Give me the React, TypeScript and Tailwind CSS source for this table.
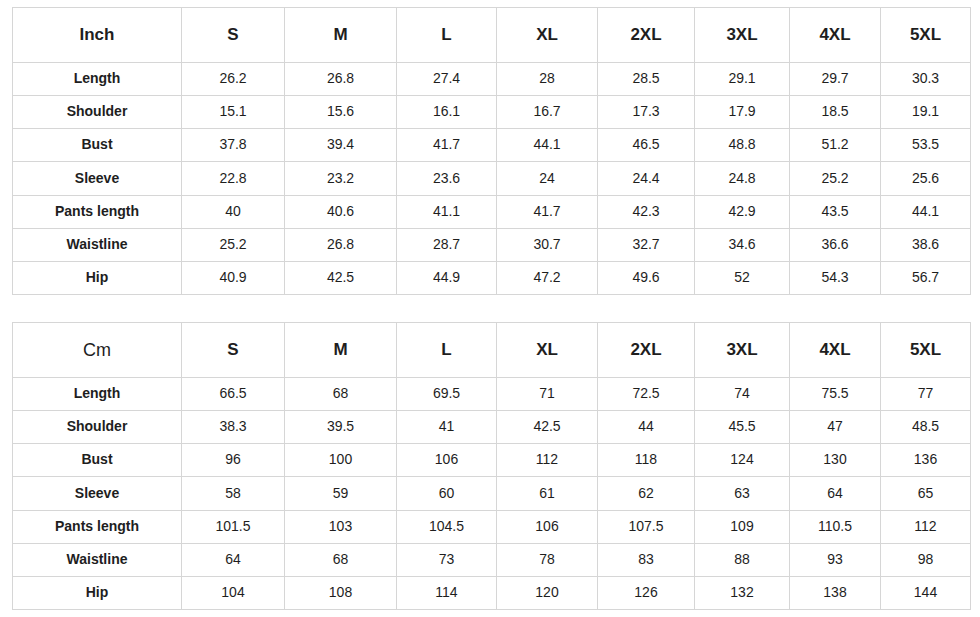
const sizes = ["S", "M", "L", "XL", "2XL", "3XL", "4XL", "5XL"];
const widths = ["w-[169px]", "w-[103px]", "w-[112px]", "w-[100px]", "w-[101px]", "w-[97px]", "w-[95px]", "w-[91px]", "w-[90px]"];

const inch: [string, string[]][] = [
  ["Length", ["26.2", "26.8", "27.4", "28", "28.5", "29.1", "29.7", "30.3"]],
  ["Shoulder", ["15.1", "15.6", "16.1", "16.7", "17.3", "17.9", "18.5", "19.1"]],
  ["Bust", ["37.8", "39.4", "41.7", "44.1", "46.5", "48.8", "51.2", "53.5"]],
  ["Sleeve", ["22.8", "23.2", "23.6", "24", "24.4", "24.8", "25.2", "25.6"]],
  ["Pants length", ["40", "40.6", "41.1", "41.7", "42.3", "42.9", "43.5", "44.1"]],
  ["Waistline", ["25.2", "26.8", "28.7", "30.7", "32.7", "34.6", "36.6", "38.6"]],
  ["Hip", ["40.9", "42.5", "44.9", "47.2", "49.6", "52", "54.3", "56.7"]],
];

const cm: [string, string[]][] = [
  ["Length", ["66.5", "68", "69.5", "71", "72.5", "74", "75.5", "77"]],
  ["Shoulder", ["38.3", "39.5", "41", "42.5", "44", "45.5", "47", "48.5"]],
  ["Bust", ["96", "100", "106", "112", "118", "124", "130", "136"]],
  ["Sleeve", ["58", "59", "60", "61", "62", "63", "64", "65"]],
  ["Pants length", ["101.5", "103", "104.5", "106", "107.5", "109", "110.5", "112"]],
  ["Waistline", ["64", "68", "73", "78", "83", "88", "93", "98"]],
  ["Hip", ["104", "108", "114", "120", "126", "132", "138", "144"]],
];

function SizeTable({ unit, bold, rows }: { unit: string; bold: boolean; rows: [string, string[]][] }) {
  return (
    <table className="table-fixed border-collapse w-[958px] text-[#1e1e1e] text-center">
      <colgroup>
        {widths.map((w, i) => (
          <col key={i} className={w} />
        ))}
      </colgroup>
      <thead>
        <tr className="h-[55px]">
          <th className={bold ? "border border-[#d6d6d6] text-[17px] font-bold" : "border border-[#d6d6d6] text-[18px] font-normal"}>{unit}</th>
          {sizes.map((s) => (
            <th key={s} className="border border-[#d6d6d6] text-[17px] font-bold">{s}</th>
          ))}
        </tr>
      </thead>
      <tbody>
        {rows.map(([name, vals], r) => (
          <tr key={name} className={r === 3 ? "h-[34px]" : "h-[33px]"}>
            <td className="border border-[#d6d6d6] text-[14px] font-bold pb-[1px]">{name}</td>
            {vals.map((v, i) => (
              <td key={i} className="border border-[#d6d6d6] text-[14px] pb-[1px]">{v}</td>
            ))}
          </tr>
        ))}
      </tbody>
    </table>
  );
}

export default function App() {
  return (
    <div className="bg-white w-[980px] h-[617px] overflow-hidden px-[12px] pt-[7px] font-['Liberation_Sans',Arial,sans-serif]">
      <div className="flex flex-col gap-[27px]">
        <SizeTable unit="Inch" bold rows={inch} />
        <SizeTable unit="Cm" bold={false} rows={cm} />
      </div>
      <p className="mt-[3px] text-[13px] leading-[18px] text-[#333]">Note: 1 inch = 2.54 cm</p>
    </div>
  );
}
